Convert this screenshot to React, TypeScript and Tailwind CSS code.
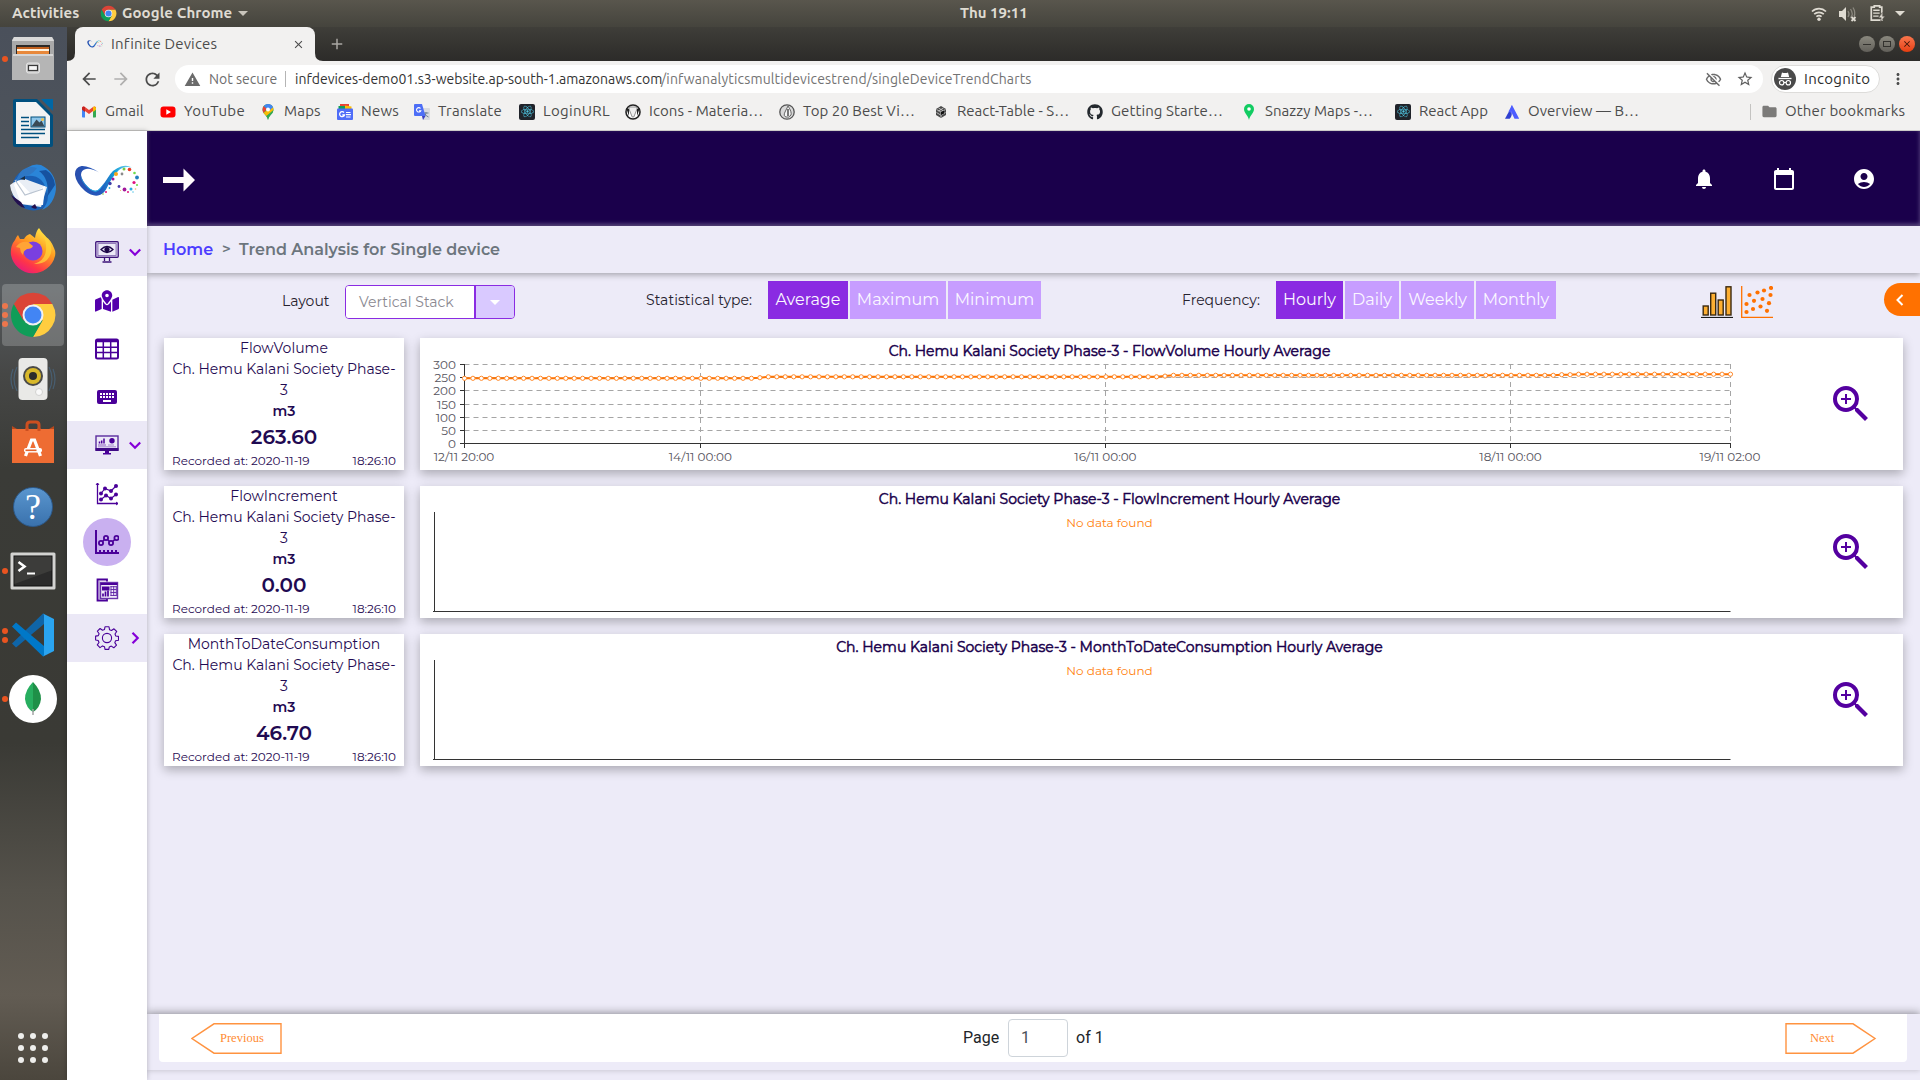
import React from "react";
import { MdNotifications, MdCalendarToday, MdAccountCircle, MdZoomIn, MdStarBorder, MdWarning, MdFolder, MdArrowBack, MdArrowForward, MdRefresh, MdMoreVert, MdClose, MdAdd, MdOutlineVisibilityOff } from "react-icons/md";
import { FaGithub, FaMapMarkedAlt, FaReact } from "react-icons/fa";

type TextProps = { className?: string; children: React.ReactNode };

function T({ className = "", children }: TextProps) {
  return <span className={"block shrink-0 whitespace-nowrap " + className}>{children}</span>;
}

/* ---------- Desktop top bar ---------- */

function ChromeLogo({ className = "" }: { className?: string }) {
  return (
    <svg viewBox="0 0 48 48" className={className}>
      <path d="M24 13 H43.3 A22 22 0 0 1 24 46 L33.5 29.5 Z" fill="#ffcd40" />
      <path d="M4.95 13 A22 22 0 0 0 24 46 L33.5 29.5 L14.5 29.5 Z" fill="#0f9d58" />
      <path d="M4.95 13 A22 22 0 0 1 43.3 13 H24 L14.5 29.5 Z" fill="#db4437" />
      <circle cx="24" cy="24" r="10.5" fill="#f1f1f1" />
      <circle cx="24" cy="24" r="8.5" fill="#4285f4" />
    </svg>
  );
}

function TopBar() {
  return (
    <div className="flex h-[27px] shrink-0 items-center bg-linear-to-b from-[#59564d] to-[#45443d] pl-3 pr-[15px] font-['Ubuntu','Noto_Sans',sans-serif] text-[15px] font-bold text-[#dfdbd2]">
      <T className="w-[68px] tracking-[0.05px]">Activities</T>
      <ChromeLogo className="ml-[20px] size-[17px]" />
      <T className="ml-[5px] w-[110px] tracking-[0.1px]">Google Chrome</T>
      <span className="ml-[6px] border-x-[5px] border-t-[5px] border-x-transparent border-t-[#c9c5bc]" />
      <T className="ml-[712px] w-[67px]">Thu 19:11</T>
      <div className="ml-auto flex items-center text-[#dfdbd2]">
        <svg viewBox="0 0 16 16" className="size-4" fill="none" stroke="#dfdbd2" strokeWidth="1.7">
          <path d="M1 5.5a10 10 0 0 1 14 0M3.2 8.2a7 7 0 0 1 9.6 0M5.4 10.7a4 4 0 0 1 5.2 0" />
          <circle cx="8" cy="13.3" r="1.7" fill="#dfdbd2" stroke="none" />
        </svg>
        <svg viewBox="0 0 18 16" className="ml-[12px] h-4 w-[18px]">
          <path d="M0 5h3l4-4v14l-4-4H0z" fill="#dfdbd2" />
          <path d="M9 5q2 3 0 6M11.5 3q3.5 5 0 9M14 1.5q3 5 1 9" stroke="#8b887f" strokeWidth="1.3" fill="none" />
          <path d="M12.5 11l4 4m0-4l-4 4" stroke="#dfdbd2" strokeWidth="1.8" />
        </svg>
        <svg viewBox="0 0 14 16" className="ml-[13px] h-[19px] w-[15px]">
          <path d="M4 2V.8h5V2h2v12.2H1.2V2z" fill="none" stroke="#dfdbd2" strokeWidth="1.6" />
          <path d="M3 5h6M3 7.7h6M3 10.5h5" stroke="#dfdbd2" strokeWidth="1.3" />
          <path d="M11.5 7l-3.5 5h2.5l-1 4 4.5-5.5h-2.5z" fill="#dfdbd2" stroke="#4c4a43" strokeWidth=".5" />
        </svg>
        <span className="ml-[10px] border-x-[5px] border-t-[5px] border-x-transparent border-t-[#dfdbd2]" />
      </div>
    </div>
  );
}

/* ---------- Dock ---------- */

function FilesIcon() {
  return (
    <svg viewBox="0 0 48 48" className="size-12">
      <path d="M5 2h38l2 3v40H3V5z" fill="#a9a9a9" />
      <path d="M5 2h38l2 4H3z" fill="#d9d9d9" />
      <path d="M7 10h34v10H7z" fill="#2d2926" />
      <path d="M8 12h32v8H8z" fill="#c2611f" />
      <path d="M8 14h32v6H8z" fill="#fff3e0" />
      <path d="M8 16h32v4H8z" fill="#e8883a" />
      <path d="M4 19h40l1 2v24H3V21z" fill="#b5b5b5" />
      <path d="M4 19h40v2H4z" fill="#d5d5d5" />
      <rect x="17.5" y="28" width="13" height="10" rx="2" fill="#c9c9c9" stroke="#e6e6e6" />
      <rect x="19.5" y="30.5" width="9" height="5" fill="#f7f7f7" stroke="#3b3b3b" strokeWidth="1.2" />
    </svg>
  );
}

function WriterIcon() {
  return (
    <svg viewBox="0 0 48 48" className="size-12">
      <path d="M6 0H28L44 16V46q0 2-2 2H6q-2 0-2-2V2q0-2 2-2z" fill="#00507f" />
      <path d="M32 0h12v12z" fill="#0067a5" />
      <path d="M7 3H27L41 17V45H7z" fill="#f3f3f3" />
      <path d="M12 18.5h8M12 22.5h8M12 26.5h8M12 30.5h24M12 34.5h24M12 38.5h18" stroke="#00507f" strokeWidth="1.7" />
      <rect x="22" y="18" width="14" height="10" fill="#8ec6ea" stroke="#00507f" />
      <path d="M22.5 27.5l5-7 3 3 2-2 3 6z" fill="#3a4a55" />
      <circle cx="33.5" cy="20.5" r="1.5" fill="#f0c04a" />
    </svg>
  );
}

function ThunderbirdIcon() {
  return (
    <svg viewBox="0 0 48 48" className="size-12">
      <circle cx="24.5" cy="26" r="21.5" fill="#1a5fb4" />
      <path d="M12 12Q20-1 32 2q15 7 15 24-2 16-14 21 8-9 5-17Q34 8 12 14z" fill="#2a85d8" />
      <path d="M30 8q11 8 8 26l8-12q-1-10-9-15z" fill="#1652a0" />
      <path d="M1 22q1 11 11 19l20 3 6-20-22-8Q7 17 1 22z" fill="#e9eef5" />
      <path d="M8 16l14 15 14-8-2 19-22-1L5 22z" fill="#fff" />
      <path d="M6 17l10 15 18-6" fill="none" stroke="#b9c3d0" strokeWidth="1.2" />
      <path d="M2 32q6 12 14 13l-4-6zM22 44q4 3 6 1l-2-4z" fill="#23104f" />
      <path d="M8 15Q14 1 28 5q-6 8-14 9l-7 5z" fill="#2f77c4" />
      <path d="M11 16l5-3v4z" fill="#1b3048" />
    </svg>
  );
}

function FirefoxIcon() {
  return (
    <svg viewBox="0 0 48 48" className="size-12">
      <defs>
        <linearGradient id="fx" x1=".8" y1="0" x2=".2" y2="1">
          <stop offset="0" stopColor="#fff44f" />
          <stop offset=".4" stopColor="#ff9a1f" />
          <stop offset=".75" stopColor="#ff3647" />
          <stop offset="1" stopColor="#e31587" />
        </linearGradient>
      </defs>
      <path d="M30 1q3 5 7 9 5 3 8 11 2 4 1 8A22.5 22.5 0 0 1 2 28Q1 19 6 13q1-3 3-5l2 4 4 0q2-4 6-5l5 4q1-7 4-10z" fill="url(#fx)" />
      <circle cx="24" cy="24" r="9.5" fill="#7a3fe0" />
      <path d="M7 20q4-6 12-5l5 4q-1 3-6 3-4 2-4 6-3-3-3-7z" fill="#ffa436" />
      <path d="M30 3q8 7 7 20-1 11-12 14 9 0 13-4 7-8 3-17Q37 8 30 3z" fill="#ffd43a" opacity=".75" />
    </svg>
  );
}

function SpeakerIcon() {
  return (
    <svg viewBox="0 0 48 48" className="size-12">
      <path d="M8 12q-6 12 0 24M4 14q-4 10 0 20M40 12q6 12 0 24M44 14q4 10 0 20" fill="none" stroke="#48647c" strokeWidth="1.2" opacity=".8" />
      <rect x="9.5" y="3" width="29" height="42" rx="4" fill="#e9e9e7" />
      <circle cx="24" cy="21" r="10" fill="#4a4a48" />
      <circle cx="24" cy="21" r="8" fill="#d8b82a" />
      <circle cx="24" cy="21" r="4" fill="#2b2b2b" />
      <circle cx="30" cy="37" r="3.5" fill="#f9f9f9" stroke="#d2d2d0" />
    </svg>
  );
}

function SoftwareIcon() {
  return (
    <svg viewBox="0 0 48 48" className="size-12">
      <path d="M18 12V6q0-3 3-3h6q3 0 3 3v6" fill="none" stroke="#cc4f20" strokeWidth="3" />
      <path d="M3 7l5 3h32l5-3v37H3z" fill="#b8481d" />
      <path d="M3 10h42v34H3z" fill="#ee6c33" />
      <path d="M18 12V9M30 12V9" stroke="#cc4f20" strokeWidth="3" />
      <path d="M16.5 37l6-16h3l6 16" fill="none" stroke="#fff" strokeWidth="3.2" />
      <rect x="15" y="29" width="18" height="4.5" rx="2" fill="#fff" />
      <rect x="16.5" y="30.5" width="11" height="1.6" fill="#e2622c" />
    </svg>
  );
}

function HelpIcon() {
  return (
    <span className="flex size-10 items-center justify-center rounded-full border border-[#2c5a8c] bg-linear-to-b from-[#5a96cf] to-[#3a72ad] font-['Liberation_Serif',serif] text-[36px] leading-none text-white">?</span>
  );
}

function TerminalIcon() {
  return (
    <svg viewBox="0 0 48 40" className="h-10 w-12">
      <rect x="1.5" y="1.5" width="45" height="37" rx="1.5" fill="#d3d3d1" />
      <rect x="5" y="5" width="38" height="30" fill="#2b2b2b" stroke="#111" />
      <path d="M5.5 5.5h37v14L5.500 33z" fill="#3c3c3a" />
      <path d="M9.5 11l6 4.5-6 4.5" fill="none" stroke="#fff" strokeWidth="2.6" />
      <path d="M18 22.5h8" stroke="#fff" strokeWidth="2" />
    </svg>
  );
}

function VsCodeIcon() {
  return (
    <svg viewBox="0 0 48 48" className="size-12">
      <path d="M3 32.500l4 4L35 13V3l-1-.5z" fill="#0f65a8" />
      <path d="M3 15.500l4-4L35 35v10l-1 .5z" fill="#0078c8" />
      <path d="M34 2.500L45 8v32l-11 5.500q1-.5 1-2V4.500q0-1.500-1-2z" fill="#2aa4f0" />
    </svg>
  );
}

function MongoIcon() {
  return (
    <span className="flex size-12 items-center justify-center rounded-full bg-white">
      <svg viewBox="0 0 20 36" className="h-9 w-5">
        <path d="M10 1Q2 9 2 18q1 9 8 13z" fill="#27ae5f" />
        <path d="M10 1q8 8 8 17-1 9-8 13z" fill="#1f9048" />
        <path d="M10 28v6" stroke="#a5a5a5" strokeWidth="1.5" />
      </svg>
    </span>
  );
}

const dock = [
  { icon: <FilesIcon />, dots: 1 },
  { icon: <WriterIcon />, dots: 0 },
  { icon: <ThunderbirdIcon />, dots: 0 },
  { icon: <FirefoxIcon />, dots: 0 },
  { icon: <ChromeLogo className="size-12" />, dots: 3, active: true },
  { icon: <SpeakerIcon />, dots: 0 },
  { icon: <SoftwareIcon />, dots: 0 },
  { icon: <HelpIcon />, dots: 0 },
  { icon: <TerminalIcon />, dots: 1 },
  { icon: <VsCodeIcon />, dots: 2 },
  { icon: <MongoIcon />, dots: 1 },
];

function Dock() {
  return (
    <div className="flex w-[67px] shrink-0 flex-col bg-[linear-gradient(180deg,#4a505b_0%,#4e545b_14%,#565a5d_25%,#464746_33%,#3a3b37_42%,#3a3a35_68%,#55524b_82%,#625c53_92%,#4b463d_100%)] pt-px">
      <div className="flex flex-col gap-[2px]">
        {dock.map((d, i) => (
          <div key={i} className="flex h-[62px] w-[67px] items-center">
            <div className="flex w-[9px] shrink-0 flex-col items-center gap-[3px]">
              {Array.from({ length: d.dots }).map((_, k) => (
                <span key={k} className="size-[6px] rounded-full bg-[#e95420]" />
              ))}
            </div>
            <div className={d.active ? "-ml-[7px] flex h-[62px] w-[62px] items-center justify-center rounded-[4px] bg-white/20" : "-ml-[7px] flex h-[62px] w-[62px] items-center justify-center"}>
              {d.icon}
            </div>
          </div>
        ))}
      </div>
      <div className="mt-auto mb-[17px] ml-[18px] grid w-[30px] grid-cols-3 gap-[6px]">
        {Array.from({ length: 9 }).map((_, i) => (
          <span key={i} className="size-[6px] rounded-full bg-[#eeeeec]" />
        ))}
      </div>
    </div>
  );
}

/* ---------- Browser chrome ---------- */

const logoDots: [number, number, number, string][] = [
  [42, 9, 2, "#f9a61a"], [48, 9, 1.4, "#8a8a8a"], [50, 4, 1.5, "#7ac943"], [55.5, 4.5, 1.8, "#ee3a24"],
  [60.5, 8, 1.3, "#6fdc4c"], [63, 12.5, 1.9, "#1f7fbf"], [60, 17.5, 1.6, "#e0137e"], [63, 20, 1.1, "#6fdc4c"],
  [57, 24, 1.5, "#2aa9e0"], [50.5, 24.5, 1.9, "#a3179c"], [45, 21.5, 1.4, "#4b3fae"], [39, 14, 1.5, "#a3179c"],
  [36, 18.5, 1.7, "#3f3fa8"], [54, 27, 1, "#e0137e"], [32, 27, 1, "#e0137e"], [61.5, 24, 0.8, "#f6b26b"],
  [35.5, 23, 0.9, "#2aa9e0"], [59, 27, 0.8, "#5cc8e8"], [29, 29, 0.8, "#7ac943"], [46.5, 25.5, 0.6, "#f6b26b"],
];

function LogoMark({ className = "" }: { className?: string }) {
  return (
    <svg viewBox="0 0 66 32" className={className}>
      <defs>
        <linearGradient id="lg" x1="0" y1="0" x2="1" y2="0">
          <stop offset="0" stopColor="#2a4fae" />
          <stop offset=".45" stopColor="#2458bd" />
          <stop offset=".7" stopColor="#169fd8" />
          <stop offset="1" stopColor="#7fd6f2" />
        </linearGradient>
      </defs>
      <path d="M25 7.500Q15 .5 7.500 1 .5 2.500 1 10q1 8 10 16 7 5.500 13 4.500 5-1 8-6 6-13 13-19.500 5-4.500 13-2.500-5-3-11-1-8 2.500-13 11Q28 22 24 25q-4 2.500-10-3-6-6-7-12Q7 5 12 4q5-1 13 3.500z" fill="url(#lg)" />
      <path d="M6.500 10Q8 17 14 22q6 5.500 10 3 3-2 6-7-3 7-7.500 8.500-4 1-10-5Q7 16 6.500 10z" fill="#1fb4e6" />
      {logoDots.map(([x, y, r, c], i) => (
        <circle key={i} cx={x} cy={y} r={r} fill={c} />
      ))}
    </svg>
  );
}

function TabStrip() {
  return (
    <div className="flex h-[34px] shrink-0 items-end bg-linear-to-b from-[#3f3e39] to-[#2c2b29] pr-[5px]">
      <svg viewBox="0 0 8 8" className="size-2"><path d="M8 0v8H0Q8 8 8 0z" fill="#f2f1f0" /></svg>
      <div className="flex h-[34px] w-[240px] items-center rounded-t-[8px] bg-[#f2f1f0] pr-[10px] pl-[12px] font-['Ubuntu','Noto_Sans',sans-serif] text-[15px] text-[#4c4c4c]">
        <LogoMark className="h-4 w-4" />
        <T className="ml-2 w-[106px] tracking-[0.15px]">Infinite Devices</T>
        <MdClose className="ml-auto size-[13px]" />
      </div>
      <svg viewBox="0 0 8 8" className="size-2"><path d="M0 0v8h8Q0 8 0 0z" fill="#f2f1f0" /></svg>
      <MdAdd className="mb-2 ml-[5px] size-[18px] text-[#a9a7a2]" />
      <div className="mb-[9px] ml-auto flex gap-1">
        <span className="flex size-4 items-center justify-center rounded-full bg-linear-to-b from-[#8a887e] to-[#62605a]">
          <span className="h-px w-2 bg-[#33322e]" />
        </span>
        <span className="flex size-4 items-center justify-center rounded-full bg-linear-to-b from-[#8a887e] to-[#62605a]">
          <span className="h-[6px] w-2 border border-[#33322e]" />
        </span>
        <span className="flex size-4 items-center justify-center rounded-full bg-linear-to-b from-[#f9764c] to-[#e63d0c]">
          <MdClose className="size-[10px] text-[#3c1408]" />
        </span>
      </div>
    </div>
  );
}

function UrlBar() {
  return (
    <div className="flex h-[36px] shrink-0 items-center bg-[#f2f1f0] pl-[12px] font-['Ubuntu','Noto_Sans',sans-serif] text-[14px] text-[#3c3c3c]">
      <MdArrowBack className="size-5 text-[#4c4c4c]" />
      <MdArrowForward className="ml-[12px] size-5 text-[#b0afae]" />
      <MdRefresh className="ml-[11px] size-[21px] text-[#4c4c4c]" />
      <div className="ml-[12px] flex h-[28px] w-[1588px] items-center rounded-full bg-white pl-[9px]">
        <MdWarning className="size-[17px] text-[#6b6b6b]" />
        <T className="ml-[8px] w-[69px] text-[#6e6e6e]">Not secure</T>
        <span className="ml-[7px] h-4 w-px bg-[#b5b5b5]" />
        <T className="ml-[9px] w-[366px] text-[#333]">infdevices-demo01.s3-website.ap-south-1.amazonaws.com</T>
        <T className="w-[371px] tracking-[0.15px] text-[#737373]">/infwanalyticsmultidevicestrend/singleDeviceTrendCharts</T>
        <MdOutlineVisibilityOff className="mr-[14px] ml-auto size-[17px] text-[#6b6b6b]" />
        <MdStarBorder className="mr-[9px] size-[18px] text-[#5f5f5f]" />
      </div>
      <div className="ml-[8px] flex h-[28px] w-[109px] items-center rounded-full border border-[#dddcda] bg-white pl-[2px]">
        <svg viewBox="0 0 22 22" className="size-[22px]">
          <circle cx="11" cy="11" r="11" fill="#4a4a4a" />
          <path d="M8 4.500q3 1 6 0l1.200 4.500h-8.400z" fill="#fff" />
          <path d="M4.500 10.500h13" stroke="#fff" strokeWidth="1.3" />
          <circle cx="7.700" cy="14.700" r="2.200" fill="none" stroke="#fff" strokeWidth="1.2" />
          <circle cx="14.300" cy="14.700" r="2.200" fill="none" stroke="#fff" strokeWidth="1.2" />
          <path d="M9.900 14.500h2.200" stroke="#fff" />
        </svg>
        <T className="ml-[8px] w-[66px] text-[15px] tracking-[0.3px] text-[#2e2e2e]">Incognito</T>
      </div>
      <MdMoreVert className="ml-[9px] size-[18px] text-[#4c4c4c]" />
    </div>
  );
}

const GmailIcon = () => (
  <svg viewBox="0 0 16 16" className="size-4">
    <path d="M1 3h3v10.500H1.800Q1 13.500 1 12.700z" fill="#4285f4" />
    <path d="M12 3h3v9.700q0 .8-.8.800H12z" fill="#34a853" />
    <path d="M1 4.500V3.800Q2 1.800 4 3l4 3 4-3q2-1.200 3 .8v.7L12 7l-4 3-4-3z" fill="#ea4335" />
    <path d="M12 3q2-1.200 3 .8v2L12 8z" fill="#fbbc04" />
    <path d="M4 3q-2-1.200-3 .8v2L4 8z" fill="#c5221f" />
  </svg>
);
const YouTubeIcon = () => (
  <svg viewBox="0 0 16 16" className="size-4">
    <rect x=".5" y="2.500" width="15" height="11" rx="3" fill="#f00" />
    <path d="M6.300 5.300v5.400L11 8z" fill="#fff" />
  </svg>
);
const MapsIcon = () => (
  <svg viewBox="0 0 16 16" className="size-4">
    <path d="M8 0a5.500 5.500 0 0 1 5.500 5.500C13.500 10 9 11 8 16 7 11 2.500 10 2.500 5.500A5.500 5.500 0 0 1 8 0z" fill="#34a853" />
    <path d="M3.800 2L7 5 3.500 9Q1.500 5 3.800 2z" fill="#ea4335" />
    <path d="M3.500 9L12 2q2 2.500 1 5.500L6.500 12z" fill="#fbbc04" />
    <path d="M6.500 12L13.300 6q0 3-2.800 5Q8.500 13 8 16 7.500 13.500 6.500 12z" fill="#34a853" />
    <path d="M8 0q3.500 0 5 3.300L10 6 7 5 3.800 2Q5.500 0 8 0z" fill="#4285f4" />
    <circle cx="8" cy="5.400" r="2" fill="#fff" />
  </svg>
);
const NewsIcon = () => (
  <svg viewBox="0 0 16 16" className="size-4">
    <path d="M3 0h9v5H3z" fill="#ea4335" />
    <path d="M1.500 2H8v4H1.500z" fill="#0f9d58" />
    <path d="M8 1.500l6.500 1V6H8z" fill="#fbbc04" />
    <rect x="0" y="4.500" width="16" height="11.500" rx="1" fill="#4f6df8" />
    <path d="M7 8.500a2.500 2.500 0 1 0 .5 2.500H5.300" fill="none" stroke="#fff" strokeWidth="1.3" />
    <path d="M9 8.500h4.500M9 10.700h5M9 13h4.500" stroke="#fff" strokeWidth="1.2" />
  </svg>
);
const TranslateIcon = () => (
  <svg viewBox="0 0 16 16" className="size-4">
    <path d="M6 4h9q1 0 1 1v10q0 1-1 1H9z" fill="#d9dbe0" />
    <path d="M10 9h4.500M12 8v1q0 3-3 4M11 10q1 2 3.500 3" stroke="#6d7f93" fill="none" />
    <path d="M1 0h7l3.500 12H1q-1 0-1-1V1q0-1 1-1z" fill="#4d6ef6" />
    <path d="M8 12h3.500L9 16z" fill="#3a3fc0" />
    <path d="M6.500 4.500a2.200 2.200 0 1 0 .3 2.200H5" fill="none" stroke="#fff" strokeWidth="1.1" />
  </svg>
);
const ReactFavicon = () => (
  <span className="flex size-4 items-center justify-center rounded-[2px] bg-[#20232a]">
    <FaReact className="size-[13px] text-[#4ec3df]" />
  </span>
);
const IconsFavicon = () => (
  <svg viewBox="0 0 16 16" className="size-4">
    <circle cx="8" cy="8" r="7" fill="#fff" stroke="#222" strokeWidth="1.6" />
    <path d="M4 3h8v2L8.800 13H7.200L4 5z" fill="#eee" stroke="#777" strokeWidth=".8" />
    <path d="M1.200 4L4 5v7zM14.800 4L12 5v7z" fill="#222" />
  </svg>
);
const DropIcon = () => (
  <svg viewBox="0 0 16 16" className="size-4">
    <circle cx="8" cy="8" r="7.200" fill="#d8d8d8" stroke="#555" strokeWidth="1.3" />
    <path d="M9 2q4 6 3 9-2 3-5 2Q4 12 6 8z" fill="#f6f6f6" stroke="#666" />
    <path d="M9 5v7" stroke="#444" strokeWidth="1.4" />
  </svg>
);
const CubeIcon = () => (
  <svg viewBox="0 0 16 16" className="size-4">
    <path d="M8 2l5 3v6l-5 3-5-3V5z" fill="#4a4a4a" />
    <path d="M3.500 5.500L8 8l4.500-2.500M8 8v5.500M5.500 4l5 3M10.500 4l-5 3M3.500 8.500l4 2.500M12.500 8.500l-4 2.500" stroke="#d6d6d6" strokeWidth=".8" fill="none" />
    <path d="M8 8l3-1.500v3L8 11z" fill="#111" />
  </svg>
);
const PinIcon = () => (
  <svg viewBox="0 0 16 16" className="size-4">
    <path d="M8 0a5 5 0 0 1 5 5c0 4-4 6-5 11C7 11 3 9 3 5a5 5 0 0 1 5-5z" fill="#12cc62" />
    <circle cx="8" cy="5" r="1.800" fill="#fff" />
  </svg>
);
const AtlasIcon = () => (
  <svg viewBox="0 0 16 16" className="size-4">
    <path d="M5.200 7L1 14.800h4.700Q9 11 7 7.200z" fill="#2f3fd0" />
    <path d="M8 1Q5.500 4.500 8 9.500l2.500 5.300h4.700z" fill="#4d5cff" />
    <path d="M8 1L4.500 7.500 7.500 9z" fill="#4d5cff" />
  </svg>
);

const bookmarks = [
  { icon: <GmailIcon />, label: "Gmail", box: "w-[79px]", text: "w-[39px] tracking-[0.15px]" },
  { icon: <YouTubeIcon />, label: "YouTube", box: "w-[100px]", text: "w-[61px] tracking-[0.3px]" },
  { icon: <MapsIcon />, label: "Maps", box: "w-[77px]", text: "w-[37px] tracking-[0.2px]" },
  { icon: <NewsIcon />, label: "News", box: "w-[77px]", text: "w-[38px] tracking-[0.2px]" },
  { icon: <TranslateIcon />, label: "Translate", box: "w-[105px]", text: "w-[64px] tracking-[0.2px]" },
  { icon: <ReactFavicon />, label: "LoginURL", box: "w-[106px]", text: "w-[67px] tracking-[0.3px]" },
  { icon: <IconsFavicon />, label: "Icons - Materia…", box: "w-[154px]", text: "w-[114px] tracking-[0.1px]" },
  { icon: <DropIcon />, label: "Top 20 Best Vi…", box: "w-[154px]", text: "w-[112px] tracking-[0.05px]" },
  { icon: <CubeIcon />, label: "React-Table - S…", box: "w-[154px]", text: "w-[112px]" },
  { icon: <FaGithub className="size-4 text-[#24292e]" />, label: "Getting Starte…", box: "w-[154px]", text: "w-[112px] tracking-[0.1px]" },
  { icon: <PinIcon />, label: "Snazzy Maps -…", box: "w-[154px]", text: "w-[108px] tracking-[0.05px]" },
  { icon: <ReactFavicon />, label: "React App", box: "w-[109px]", text: "w-[69px]" },
  { icon: <AtlasIcon />, label: "Overview — B…", box: "w-[140px]", text: "w-[111px] tracking-[0.05px]" },
];

function BookmarksBar() {
  return (
    <div className="flex h-[34px] shrink-0 items-center border-b border-[#cbcac7] bg-[#f2f1f0] pr-[14px] pb-1 pl-[14px] font-['Ubuntu','Noto_Sans',sans-serif] text-[15px] text-[#4c4c4c]">
      {bookmarks.map((b) => (
        <div key={b.label} className={"flex shrink-0 items-center gap-2 " + b.box}>
          <span className="shrink-0">{b.icon}</span>
          <T className={b.text}>{b.label}</T>
        </div>
      ))}
      <span className="ml-auto h-4 w-px bg-[#c4c3c1]" />
      <MdFolder className="ml-[10px] size-[17px] text-[#7c7b79]" />
      <T className="ml-[7px] w-[121px] tracking-[0.15px]">Other bookmarks</T>
    </div>
  );
}

/* ---------- App sidebar ---------- */

const Chevron = ({ right = false }: { right?: boolean }) => (
  <svg viewBox="0 0 12 12" className={right ? "size-3 -rotate-90" : "size-3"} fill="none" stroke="#8500d8" strokeWidth="2.200">
    <path d="M.8 3.500L6 8.700l5.200-5.200" />
  </svg>
);

const EyeMonitor = () => (
  <svg viewBox="0 0 24 24" className="size-6">
    <rect x=".7" y="1.700" width="22.600" height="15.600" rx="1" fill="#c6bbdf" stroke="#3c1278" strokeWidth="1.2" />
    <rect x="3" y="3.700" width="18" height="11.600" fill="#ece9f7" stroke="#6a4b9e" strokeWidth=".6" />
    <path d="M6 9.500q6-6 12 0-6 6-12 0z" fill="#ece9f7" stroke="#1c0547" strokeWidth="1.3" />
    <circle cx="12" cy="9.500" r="2.600" fill="#1c0547" />
    <path d="M9.500 17.500v3.500M14.500 17.500v3.500M7.500 22h9" stroke="#3c1278" strokeWidth="1.3" />
  </svg>
);
const TableIcon = () => (
  <svg viewBox="0 0 24 22" className="h-[22px] w-6" fill="none" stroke="#4a0099">
    <rect x="1" y="1.500" width="22" height="19" rx="1.500" strokeWidth="2" />
    <path d="M1 3h22" strokeWidth="2.500" />
    <path d="M1 9.200h22M1 14.500h22M8.300 3v17M15.700 3v17" strokeWidth="1.5" />
  </svg>
);
const KeyboardIcon = () => (
  <svg viewBox="0 0 20 14" className="h-[14px] w-5">
    <rect width="20" height="14" rx="2" fill="#4a0099" />
    <path d="M3 4h14M3 7h14" stroke="#fff" strokeWidth="2" strokeDasharray="2 1" />
    <path d="M6 11h8" stroke="#fff" strokeWidth="2" />
  </svg>
);
const DashboardMonitor = () => (
  <svg viewBox="0 0 24 20" className="h-5 w-6">
    <rect x="1" y="1" width="22" height="14" fill="#ece9f7" stroke="#5b2d9d" strokeWidth="1.4" />
    <path d="M.5 13h23v3H.5z" fill="#3f0a85" />
    <path d="M10 16h4v2h2v1.500H8V18h2z" fill="#4a0099" />
    <path d="M4.500 8.500V6.500M6.700 8.500V5.500M9 8.500V3.500" stroke="#4a0099" strokeWidth="1.5" />
    <circle cx="17" cy="5.800" r="2.700" fill="#4a0099" />
    <path d="M3 10h8" stroke="#8d63bf" strokeWidth="1" />
    <path d="M3 11.800h18M13 10h6" stroke="#a78ccf" strokeWidth="1" />
  </svg>
);
const ScatterLines = () => (
  <svg viewBox="0 0 24 24" className="size-6" fill="none" stroke="#4a0099">
    <path d="M2.500 1v20.500H23" strokeWidth="1.3" />
    <path d="M1 3l1.500-2L4 3M21 20l2 1.500L21 23" strokeWidth="1" />
    <path d="M6 11.500L10 6.500l6 2.500 5-5M6 17.500l5-4 5 3 5-4" strokeWidth="1.2" />
    <g fill="#4a0099" stroke="none">
      <circle cx="6" cy="11.500" r="2" /><circle cx="10" cy="6.500" r="2" /><circle cx="16" cy="9" r="2" /><circle cx="21" cy="4" r="2" />
      <circle cx="6" cy="17.500" r="2" /><circle cx="11" cy="13.500" r="2" /><circle cx="16" cy="16.500" r="2" /><circle cx="21" cy="12.500" r="2" />
    </g>
  </svg>
);
const TrendIcon = () => (
  <svg viewBox="0 0 24 24" className="size-6" fill="none" stroke="#4a0099" strokeWidth="2">
    <path d="M1 0v23h23M5 22v-2M9 22v-2M13 22v-2M17 22v-2M21 22v-2" />
    <circle cx="6" cy="13" r="2.100" strokeWidth="1.8" />
    <circle cx="11" cy="8" r="2.100" strokeWidth="1.8" />
    <circle cx="16" cy="13" r="2.100" strokeWidth="1.8" />
    <circle cx="21.500" cy="8" r="2.100" strokeWidth="1.8" />
    <path d="M7.500 11.500L9.500 9.500M12.500 9.500l2 2M17.500 11.500l2.500-2.200" strokeWidth="1.6" />
  </svg>
);
const ReportsIcon = () => (
  <svg viewBox="0 0 24 24" className="size-6" fill="none" stroke="#4a0099">
    <path d="M12 3.500V1.500H2.500v21H12V21" strokeWidth="1.8" />
    <path d="M4 3v18" stroke="#8d63bf" />
    <rect x="5.500" y="4.500" width="17" height="16" fill="#f1ebfa" strokeWidth="1.4" stroke="#6a35ab" />
    <path d="M5.500 6h17" strokeWidth="2" />
    <rect x="7" y="8.500" width="7.500" height="4" fill="#4a0099" stroke="none" />
    <path d="M15.500 8.700h6M15.500 11.500h6M15.500 14.500h6M15.500 17.500h6M16 8v10M18.700 8v10M21.300 8v10" stroke="#5d22a5" strokeWidth=".9" />
    <path d="M8 18.500v-3M10.500 18.500v-5M13 18.500v-6" strokeWidth="1.7" />
  </svg>
);
const GearIcon = () => (
  <svg viewBox="0 0 24 24" className="size-6" fill="none" stroke="#4a0099" strokeWidth="1.1" strokeLinejoin="round">
    <path d="M10 .8h4l.5 2.900 2 .8 2.500-1.700 2.700 2.700L20 8l.8 2 2.700.4v3.800l-2.900.5-.8 1.900 1.700 2.500-2.700 2.700-2.500-1.700-2 .8-.5 2.500h-3.800l-.5-2.700-2-.8L5 21.600l-2.700-2.700L4 16.500l-.8-2L.6 14v-3.900l2.700-.5.8-1.900L2.400 5.200l2.700-2.700 2.400 1.700 2-.8z" />
    <circle cx="12" cy="12" r="4.600" />
  </svg>
);

function Sidebar() {
  const row = "flex h-12 shrink-0 items-center justify-center";
  const group = "flex h-12 shrink-0 items-center bg-[#ebe8f6] pl-[28px]";
  return (
    <div className="z-10 flex w-[80px] shrink-0 flex-col bg-white shadow-[0_0_5px_rgba(0,0,0,0.250)]">
      <div className="flex h-[97px] shrink-0 items-center justify-center pt-[2px]">
        <LogoMark className="h-8 w-[66px]" />
      </div>
      <div className={group}><EyeMonitor /><span className="ml-[10px]"><Chevron /></span></div>
      <div className={row + " mt-px"}><FaMapMarkedAlt className="size-6 text-[#5400ab]" /></div>
      <div className={row}><TableIcon /></div>
      <div className={row}><KeyboardIcon /></div>
      <div className={group}><DashboardMonitor /><span className="ml-[10px]"><Chevron /></span></div>
      <div className={row + " mt-px"}><ScatterLines /></div>
      <div className={row}>
        <span className="flex size-12 items-center justify-center rounded-full bg-[#c9b0f0]"><TrendIcon /></span>
      </div>
      <div className={row}><ReportsIcon /></div>
      <div className={group}><GearIcon /><span className="ml-[10px]"><Chevron right /></span></div>
    </div>
  );
}

/* ---------- App header and controls ---------- */

function Header() {
  return (
    <div className="flex h-[95px] shrink-0 items-center bg-[#1a004b] pr-[44px] pl-4 shadow-[inset_0_-2px_4px_rgba(237,235,248,0.350)]">
      <svg viewBox="0 0 32 24" className="mt-[3px] h-6 w-8">
        <path d="M0 9h20.500V.500L32 12 20.500 23.500V15H0z" fill="#fffafc" />
      </svg>
      <div className="ml-auto flex gap-14 text-white">
        <MdNotifications className="size-6" />
        <MdCalendarToday className="size-6" />
        <MdAccountCircle className="size-6" />
      </div>
    </div>
  );
}

function Breadcrumb() {
  return (
    <div className="z-[5] flex h-[47px] shrink-0 items-center bg-[#edebf8] pl-4 text-[16px] font-semibold text-[#6c757d] shadow-[0_2px_6px_rgba(0,0,0,0.300)]">
      <T className="w-[51px] text-[#4d3dff]">Home</T>
      <T className="ml-[8px] w-[10px] text-[15px]">&gt;</T>
      <T className="ml-[7px] w-[261px]">Trend Analysis for Single device</T>
    </div>
  );
}

type Option = { label: string; box: string; on?: boolean };
const stats: Option[] = [
  { label: "Average", box: "w-[80px]", on: true },
  { label: "Maximum", box: "w-[96px]" },
  { label: "Minimum", box: "w-[93px]" },
];
const freqs: Option[] = [
  { label: "Hourly", box: "w-[67px]", on: true },
  { label: "Daily", box: "w-[54px]" },
  { label: "Weekly", box: "w-[73px]" },
  { label: "Monthly", box: "w-[80px]" },
];

function Toggle({ options }: { options: Option[] }) {
  return (
    <div className="flex gap-[2px] text-[16px] text-[#fbf8ff]">
      {options.map((o) => (
        <div key={o.label} className={"flex h-[38px] shrink-0 items-center justify-center " + (o.on ? "bg-[#8a2be2] " : "bg-[#c79dff] ") + o.box}>
          <T>{o.label}</T>
        </div>
      ))}
    </div>
  );
}

function BarsIcon() {
  return (
    <svg viewBox="0 0 32 32" className="size-8">
      <g fill="#fdaf32" stroke="#3b2a10" strokeWidth="1.4">
        <rect x="2.200" y="20" width="5" height="9" />
        <rect x="9.700" y="7.200" width="5" height="21.800" />
        <rect x="17.200" y="14" width="5" height="15" />
        <rect x="25" y=".8" width="5" height="28.200" />
      </g>
      <path d="M0 31.500h32" stroke="#1b1b1b" strokeWidth="1.2" />
    </svg>
  );
}

function ScatterIcon() {
  const pts = [[30, 2], [23, 4.5], [16.5, 6.5], [8.5, 9], [29.5, 9], [21.5, 13], [13, 14.8], [5.5, 18], [28, 17.2], [19.5, 20.5], [12, 23], [5.5, 26], [26, 24.8]];
  return (
    <svg viewBox="0 0 32 32" className="size-8" fill="#ff7100">
      {pts.map(([x, y]) => <circle key={x + "-" + y} cx={x} cy={y} r="2.100" />)}
      <path d="M.7 0v31.300H32" fill="none" stroke="#ff7100" strokeWidth="1.3" />
    </svg>
  );
}

function Controls() {
  return (
    <div className="flex h-[65px] shrink-0 items-start pt-2 pl-[135px] text-[14px] text-[#26222e]">
      <T className="mt-[10px] w-[47px]">Layout</T>
      <div className="mt-1 ml-4 flex h-[34px] w-[170px] shrink-0 overflow-hidden rounded-[4px] border border-[#8a2be2]">
        <div className="flex w-[128px] shrink-0 items-center bg-white pl-[13px] text-[#8b8991]">
          <T>Vertical Stack</T>
        </div>
        <div className="flex grow items-center justify-center border-l-2 border-[#8a2be2] bg-[#d9c9ff]">
          <span className="border-x-[5px] border-t-[5px] border-x-transparent border-t-white" />
        </div>
      </div>
      <T className="mt-[9px] ml-[131px] w-[107px] tracking-[0.05px]">Statistical type:</T>
      <div className="ml-[15px]"><Toggle options={stats} /></div>
      <T className="mt-[9px] ml-[141px] w-[78px]">Frequency:</T>
      <div className="ml-[16px]"><Toggle options={freqs} /></div>
      <div className="mt-[5px] ml-[145px] flex gap-2">
        <BarsIcon />
        <ScatterIcon />
      </div>
      <div className="mt-[2px] ml-auto flex h-[33px] w-9 items-center rounded-l-full bg-[#ff7100] pl-[11px]">
        <svg viewBox="0 0 10 12" className="h-3 w-[10px]" fill="none" stroke="#fff" strokeWidth="2"><path d="M7.500 1L2.500 6l5 5" /></svg>
      </div>
    </div>
  );
}

/* ---------- Cards ---------- */

function ValueCard({ name, value }: { name: string; value: string }) {
  return (
    <div className="flex h-[132px] w-[240px] shrink-0 flex-col items-center bg-white text-[14px] leading-[21px] text-[#1f0a52] shadow-[0_4px_10px_rgba(0,0,0,0.280)]">
      <T>{name}</T>
      <T>Ch. Hemu Kalani Society Phase-</T>
      <T>3</T>
      <T className="font-semibold">m3</T>
      <T className="mt-[3px] text-[20px] leading-[24px] font-semibold">{value}</T>
      <div className="mt-[5px] flex w-[224px] justify-between text-[12px] leading-[14px]">
        <T>Recorded at: 2020-11-19</T>
        <T>18:26:10</T>
      </div>
    </div>
  );
}

/* Chart geometry, in pixels of the 1483x132 chart card. */
const X0 = 44.5;
const X1 = 1310.5;
const yTicks: [number, number][] = [[300, 26.5], [250, 39.5], [200, 52.5], [150, 66.5], [100, 79.5], [50, 92.5], [0, 105.5]];
const xTicks: [string, number][] = [["12/11 20:00", 0], ["14/11 00:00", 28], ["16/11 00:00", 76], ["18/11 00:00", 124], ["19/11 02:00", 150]];
const px = (i: number) => X0 + ((X1 - X0) * i) / 150;
const crisp = (i: number) => Math.floor(px(i) - 0.5) + 0.5;
const level = (i: number) => (i < 35 ? 40.3 : i < 36 ? 39.7 : i < 83 ? 38.8 : i < 84 ? 38.1 : i < 130 ? 37.3 : i < 132 ? 36.7 : 36.2);

function LineChart() {
  const pts = Array.from({ length: 151 }, (_, i) => [px(i), level(i)]);
  return (
    <svg viewBox="0 0 1350 132" className="h-[132px] w-[1350px]">
      <g stroke="#a5a5a5" strokeWidth="1" strokeDasharray="5 4" fill="none">
        {yTicks.slice(0, 6).map(([v, y]) => <path key={v} d={`M${X0} ${y}H${X1}`} />)}
        {xTicks.slice(1).map(([l, i]) => <path key={l} d={`M${crisp(i)} 26V105`} />)}
      </g>
      <g stroke="#333" fill="none">
        <path d={`M${X0} 26V110M40 105.5H${X1 + 0.5}`} />
        {yTicks.map(([v, y]) => <path key={v} d={`M40 ${y}h4`} />)}
        {xTicks.map(([l, i]) => <path key={l} d={`M${crisp(i)} 105v5`} />)}
      </g>
      <g fontSize="12" fill="#55535c">
        {yTicks.map(([v, y]) => <text key={v} x="36" y={y + 4} textAnchor="end">{v}</text>)}
        {xTicks.map(([l, i]) => <text key={l} x={px(i) - 0.5} y="123" textAnchor="middle">{l}</text>)}
      </g>
      <polyline points={pts.map((p) => p.join(",")).join(" ")} fill="none" stroke="#ff7300" strokeWidth="2" />
      {pts.map(([x, y], i) => <circle key={i} cx={x} cy={y} r="2.100" fill="#fff" stroke="#ff8a2b" strokeWidth="1" />)}
    </svg>
  );
}

function EmptyChart() {
  return (
    <svg viewBox="0 0 1350 132" className="h-[132px] w-[1350px]">
      <path d="M14.5 26V125.5M13 125.5H1310.5" stroke="#333" fill="none" />
    </svg>
  );
}

function ChartCard({ title, data }: { title: string; data: boolean }) {
  return (
    <div className="relative flex h-[132px] w-[1483px] shrink-0 items-center bg-white shadow-[0_4px_10px_rgba(0,0,0,0.280)]">
      {data ? <LineChart /> : <EmptyChart />}
      <MdZoomIn className="ml-[57px] size-12 text-[#5400a0]" />
      <div className="absolute top-[3px] left-[14px] flex w-[1351px] flex-col items-center">
        <T className="text-[14px] leading-[21px] text-[#1a004b] [-webkit-text-stroke:0.5px_#1a004b]">{title}</T>
        {!data && <T className="mt-[4px] text-[12px] leading-[18px] text-[#ff7f0e]">No data found</T>}
      </div>
    </div>
  );
}

const devices = [
  { name: "FlowVolume", value: "263.60", data: true },
  { name: "FlowIncrement", value: "0.00", data: false },
  { name: "MonthToDateConsumption", value: "46.70", data: false },
];

/* ---------- Pager ---------- */

function Pager() {
  return (
    <div className="flex h-[66px] shrink-0 flex-col shadow-[0_-2px_8px_rgba(0,0,0,0.300)]">
      <div className="flex h-14 shrink-0 bg-[#edebf8] px-3 shadow-[0_1px_5px_rgba(0,0,0,0.150)]">
        <div className="flex h-12 w-[1748px] items-center rounded-b-[4px] bg-white pr-[30px] pl-8">
          <div className="grid font-['Liberation_Serif',serif] text-[12.5px] text-[#ff8c33]">
            <svg viewBox="0 0 92 31" className="col-start-1 row-start-1 h-[31px] w-[92px]"><path d="M90 .8H23L1 15.500l22 14.700h67z" fill="none" stroke="#ff9340" strokeWidth="1.4" /></svg>
            <T className="col-start-1 row-start-1 ml-[29px] w-[44px] self-center">Previous</T>
          </div>
          <div className="ml-[680px] flex items-center font-['Roboto',sans-serif] text-[16px] text-[#212529]">
            <T className="w-[37px]">Page</T>
            <div className="ml-2 flex h-[38px] w-[60px] items-center rounded-[4px] border border-[#ced4da] bg-white pl-3 text-[#495057]">1</div>
            <T className="ml-2 w-[28px]">of 1</T>
          </div>
          <div className="ml-auto grid font-['Liberation_Serif',serif] text-[12.5px] text-[#ff8c33]">
            <svg viewBox="0 0 92 31" className="col-start-1 row-start-1 h-[31px] w-[92px]"><path d="M1 .8h67l22 14.700-22 14.700H1z" fill="none" stroke="#ff9340" strokeWidth="1.4" /></svg>
            <T className="col-start-1 row-start-1 ml-[25px] w-[25px] self-center">Next</T>
          </div>
        </div>
      </div>
    </div>
  );
}

export default function App() {
  return (
    <div className="flex h-[1080px] w-[1920px] flex-col overflow-hidden">
      <TopBar />
      <div className="flex min-h-0 grow">
        <Dock />
        <div className="flex w-[1853px] flex-col">
          <TabStrip />
          <UrlBar />
          <BookmarksBar />
          <div className="flex min-h-0 grow bg-[#edebf8] font-['Montserrat','Inter',sans-serif]">
            <Sidebar />
            <div className="flex w-[1773px] flex-col">
              <Header />
              <Breadcrumb />
              <Controls />
              <div className="flex flex-col gap-4 pl-[17px]">
                {devices.map((d) => (
                  <div key={d.name} className="flex gap-4">
                    <ValueCard name={d.name} value={d.value} />
                    <ChartCard title={"Ch. Hemu Kalani Society Phase-3 - " + d.name + " Hourly Average"} data={d.data} />
                  </div>
                ))}
              </div>
              <div className="mt-auto"><Pager /></div>
            </div>
          </div>
        </div>
      </div>
    </div>
  );
}
